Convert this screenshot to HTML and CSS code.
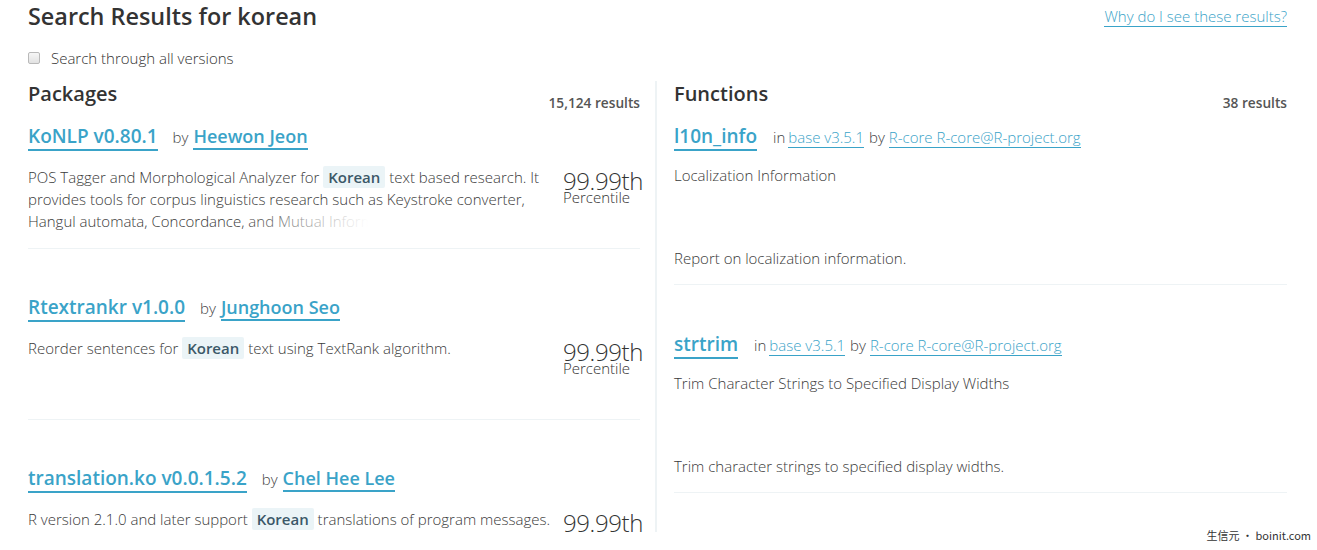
FILE: index.html
```html
<!DOCTYPE html>
<html lang="en">
<head>
<meta charset="utf-8">
<title>Search Results for korean</title>
<link rel="stylesheet" href="styles.css">
</head>
<body>
<div class="page">
  <header class="top">
    <h1 class="title">Search Results for korean</h1>
    <a class="why" href="#">Why do I see these results?</a>
  </header>
  <label class="allver"><input type="checkbox" class="chk"><span>Search through all versions</span></label>

  <div class="cols">
    <section class="col col-left">
      <div class="sec-head">
        <h2 class="sec-title">Packages</h2>
        <span class="count">15,124 results</span>
      </div>

      <article class="pkg">
        <div class="pkg-title"><a class="name" href="#">KoNLP v0.80.1</a><span class="by">by</span><a class="name author" href="#">Heewon Jeon</a></div>
        <div class="pkg-body">
          <p class="desc fade">POS Tagger and Morphological Analyzer for <span class="hl">Korean</span> text based research. It provides tools for corpus linguistics research such as Keystroke converter, Hangul automata, Concordance, and Mutual Information. It also provides a GUI tool for users.</p>
          <div class="pct"><div class="pct-num">99.99th</div><div class="pct-lbl">Percentile</div></div>
        </div>
      </article>

      <article class="pkg">
        <div class="pkg-title"><a class="name" href="#">Rtextrankr v1.0.0</a><span class="by">by</span><a class="name author" href="#">Junghoon Seo</a></div>
        <div class="pkg-body">
          <p class="desc">Reorder sentences for <span class="hl">Korean</span> text using TextRank algorithm.</p>
          <div class="pct"><div class="pct-num">99.99th</div><div class="pct-lbl">Percentile</div></div>
        </div>
      </article>

      <article class="pkg">
        <div class="pkg-title"><a class="name" href="#">translation.ko v0.0.1.5.2</a><span class="by">by</span><a class="name author" href="#">Chel Hee Lee</a></div>
        <div class="pkg-body">
          <p class="desc">R version 2.1.0 and later support <span class="hl">Korean</span> translations of program messages.</p>
          <div class="pct"><div class="pct-num">99.99th</div><div class="pct-lbl">Percentile</div></div>
        </div>
      </article>
    </section>

    <section class="col col-right">
      <div class="sec-head">
        <h2 class="sec-title">Functions</h2>
        <span class="count">38 results</span>
      </div>

      <article class="fn">
        <div class="fn-title"><a class="name" href="#">l10n_info</a><span class="in">in</span><a class="meta" href="#">base v3.5.1</a><span class="by2">by</span><a class="meta" href="#">R-core R-core@R-project.org</a></div>
        <p class="fn-short">Localization Information</p>
        <p class="fn-long">Report on localization information.</p>
      </article>

      <article class="fn">
        <div class="fn-title"><a class="name" href="#">strtrim</a><span class="in">in</span><a class="meta" href="#">base v3.5.1</a><span class="by2">by</span><a class="meta" href="#">R-core R-core@R-project.org</a></div>
        <p class="fn-short">Trim Character Strings to Specified Display Widths</p>
        <p class="fn-long">Trim character strings to specified display widths.</p>
      </article>
    </section>
  </div>
</div>
<div class="watermark">生信元 · boinit.com</div>
</body>
</html>
```

FILE: styles.css
```css
html, body {
  margin: 0;
  padding: 0;
  background: #fff;
  overflow: hidden;
}
body {
  font-family: "Open Sans", "Noto Sans", sans-serif;
  color: #333;
  height: 550px;
  position: relative;
}
a { text-decoration: none; }

.page {
  width: 1259px;
  height: 532px;
  overflow: hidden;
  padding-left: 28px;
}

.top {
  display: flex;
  justify-content: space-between;
  align-items: center;
  height: 32px;
}
.title {
  margin: 0;
  font-size: 23.4px;
  line-height: 31px;
  font-weight: 600;
  color: #333;
}
.why {
  font-size: 15px;
  font-weight: 300;
  line-height: 20px;
  color: #3aa3c8;
  border-bottom: 1px solid #3aa3c8;
  margin-top: 1px;
}

.allver {
  display: flex;
  align-items: center;
  height: 20px;
  margin-top: 16px;
  font-size: 15px;
  font-weight: 300;
  color: #333;
}
.chk {
  appearance: none;
  -webkit-appearance: none;
  width: 12px;
  height: 12px;
  margin: 0 11px 0 0;
  border: 1px solid #b9b9b9;
  border-radius: 2px;
  background: linear-gradient(#f6f6f6, #e2e2e2);
}

.cols {
  display: grid;
  grid-template-columns: 629px 630px;
  margin-top: 13px;
}
.col-left {
  padding-right: 15px;
  border-right: 2px solid #eef3f5;
}
.col-right {
  padding-left: 17px;
}

.sec-head {
  display: flex;
  justify-content: space-between;
  align-items: flex-start;
}
.sec-title {
  margin: 0;
  font-size: 20px;
  line-height: 26px;
  font-weight: 600;
  color: #333;
}
.count {
  margin-top: 13px;
  font-size: 13.7px;
  line-height: 18px;
  font-weight: 600;
  color: #555;
}

/* packages */
.pkg {
  margin-top: 11px;
  padding-bottom: 16px;
  border-bottom: 1px solid #eef3f5;
  margin-bottom: 45px;
}
.pkg-title, .fn-title {
  font-size: 19px;
  line-height: 26px;
  white-space: nowrap;
}
.name {
  font-weight: 600;
  color: #3aa3c8;
  border-bottom: 2px solid #3aa3c8;
}
.author {
  font-size: 18px;
}
.by {
  font-size: 15px;
  font-weight: 300;
  color: #444;
  margin: 0 5px 0 15px;
}
.pkg-body {
  display: flex;
  gap: 3px;
  margin-top: 16px;
}
.desc {
  flex: 1;
  margin: 0;
  height: 66px;
  overflow: hidden;
  font-size: 15px;
  line-height: 22px;
  font-weight: 300;
  color: #3a3a3a;
  position: relative;
}
.fade::after {
  content: "";
  position: absolute;
  right: 0;
  bottom: 0;
  width: 320px;
  height: 22px;
  background: linear-gradient(to right, rgba(255,255,255,0) 0%, #fff 40%);
}
.hl {
  background: #ebf4f7;
  color: #3b5868;
  font-weight: 600;
  padding: 1px 5px;
  border-radius: 2px;
}
.pct {
  width: 77px;
  flex: none;
  font-weight: 300;
  color: #333;
}
.pct-num {
  margin-top: 5px;
  font-size: 24px;
  line-height: 20px;
  letter-spacing: -0.4px;
}
.pct-lbl {
  font-size: 15px;
  line-height: 12px;
}

/* functions */
.fn {
  margin-top: 11px;
  padding-bottom: 15px;
  border-bottom: 1px solid #eef3f5;
  margin-bottom: 46px;
}
.fn-title .in {
  font-size: 15px;
  font-weight: 300;
  color: #444;
  margin: 0 3px 0 16px;
}
.fn-title .by2 {
  font-size: 15px;
  font-weight: 300;
  color: #444;
  margin: 0 4px 0 5px;
}
.meta {
  font-size: 15px;
  font-weight: 300;
  color: #3aa3c8;
  border-bottom: 1px solid #3aa3c8;
}
.fn-short, .fn-long {
  margin: 0;
  font-size: 15px;
  line-height: 22px;
  font-weight: 300;
  color: #3a3a3a;
}
.fn-short { margin-top: 14px; }
.fn-long { margin-top: 61px; }

.watermark {
  position: absolute;
  right: 4px;
  bottom: 7px;
  font-family: "Noto Sans CJK SC", "Noto Sans", sans-serif;
  font-size: 11px;
  line-height: 14px;
  color: #333;
  background: #fff;
  padding: 1px 2px;
}
```
